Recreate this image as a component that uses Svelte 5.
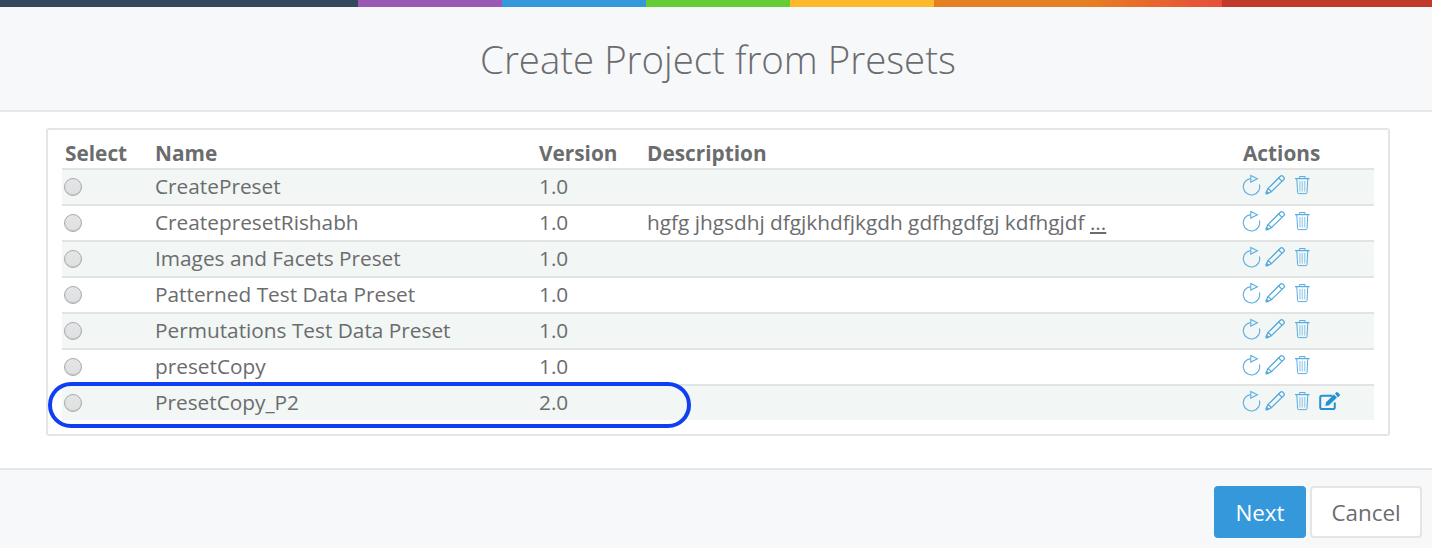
<script>
  const rows = [
    { name: 'CreatePreset', version: '1.0' },
    { name: 'CreatepresetRishabh', version: '1.0', desc: 'hgfg jhgsdhj dfgjkhdfjkgdh gdfhgdfgj kdfhgjdf', more: true },
    { name: 'Images and Facets Preset', version: '1.0' },
    { name: 'Patterned Test Data Preset', version: '1.0' },
    { name: 'Permutations Test Data Preset', version: '1.0' },
    { name: 'presetCopy', version: '1.0' },
    { name: 'PresetCopy_P2', version: '2.0', edit: true }
  ];
</script>

<div class="page">
  <div class="bar">
    <span class="seg dark"></span><span class="seg purple"></span><span class="seg blue"></span><span class="seg green"></span><span class="seg yellow"></span><span class="seg orange"></span><span class="seg red"></span>
  </div>
  <header class="head"><h1>Create Project from Presets</h1></header>
  <main class="body">
    <div class="panel">
      <div class="row th">
        <div class="c-sel">Select</div><div class="c-name">Name</div><div class="c-ver">Version</div><div class="c-desc">Description</div><div class="c-act">Actions</div>
      </div>
      {#each rows as r, i}
        <div class="row td" class:odd={i % 2 === 0}>
          <div class="c-sel"><span class="radio"></span></div>
          <div class="c-name">{r.name}</div>
          <div class="c-ver">{r.version}</div>
          <div class="c-desc">{#if r.desc}{r.desc} <u>...</u>{/if}</div>
          <div class="c-act">
            <svg class="ic" width="20" height="22" viewBox="0 0 20 22" fill="none" stroke="#5aade0" stroke-width="1.1">
              <path d="M8.4 4.6 A8.2 8.2 0 1 0 17.4 10.5" />
              <path d="M8.8 1.4 L15.4 4.7 L8.8 8 Z" />
            </svg>
            <svg class="ic pencil" width="22" height="22" viewBox="0 0 22 22" fill="none" stroke="#4fa8de" stroke-width="1.2">
              <path d="M16.6 2 Q17.6 1.2 18.6 2 L20 3.4 Q20.8 4.4 20 5.4 L7.4 17.6 L4.2 14.4 Z" />
              <path d="M14.6 3.9 L18.1 7.4" />
              <path d="M6.2 12.5 L16.3 2.4" stroke-width="0.7" />
              <path d="M4.2 14.4 L2.6 17.4 L4.6 19.2 L7.4 17.6" />
              <circle cx="2.8" cy="19" r="1.5" fill="#4fa8de" stroke="none" />
            </svg>
            <svg class="ic trash" width="16" height="22" viewBox="0 0 16 22" fill="none" stroke="#5aade0" stroke-width="1">
              <path d="M1 4.6 H15.6" stroke-width="1.3" />
              <path d="M5.6 4.2 V2.5 H11 V4.2" />
              <path d="M2.8 5 L3.6 18.8 Q3.7 19.6 4.5 19.6 H12.1 Q12.9 19.6 13 18.8 L13.8 5" />
              <path d="M5.9 7 V17.6 M8.3 7 V17.6 M10.7 7 V17.6" stroke="#a9d4ef" stroke-width="1.4" />
            </svg>
            {#if r.edit}
              <svg class="ic pen" width="22" height="22" viewBox="0 0 22 22" fill="none">
                <path d="M13.5 5.8 H3 Q1.2 5.8 1.2 7.6 V17.2 Q1.2 19 3 19 H14 Q15.8 19 15.8 17.2 V12.5" stroke="#2590d2" stroke-width="2" />
                <path d="M7 12.2 L15 4.4 L18 7.4 L10 15.2 L6.4 15.9 Z M16 3.4 L17.4 2.2 Q18 1.8 18.6 2.3 L20.8 4.4 Q21.3 5 20.8 5.6 L19 7.4 Z" fill="#2590d2" />
              </svg>
            {/if}
          </div>
        </div>
      {/each}
      <span class="oval"></span>
    </div>
  </main>
  <footer class="foot">
    <button class="btn primary">Next</button>
    <button class="btn">Cancel</button>
  </footer>
</div>

<style>
  :global(body) { margin: 0; background: #fff; }
  .page {
    width: 1432px; height: 548px; overflow: hidden;
    display: flex; flex-direction: column;
    font-family: "Open Sans", sans-serif; color: #6b6c6e;
  }
  .bar { display: flex; height: 7px; flex: none; }
  .seg { display: block; height: 100%; }
  .dark { width: 358px; background: #34495e; }
  .purple { width: 144px; background: #9b59b6; }
  .blue { width: 144px; background: #3498db; }
  .green { width: 144px; background: #66cc33; }
  .yellow { width: 144px; background: #fcb92c; }
  .orange { width: 288px; background: linear-gradient(90deg, #e67e22 0%, #e67e22 55%, #e74c3c 100%); }
  .red { flex: 1; background: #c0392b; }
  .head {
    flex: none; height: 105px; box-sizing: border-box;
    background: #f7f8fa; border-bottom: 2px solid #e5e7e8;
    display: flex; align-items: center; justify-content: center;
    padding: 2px 0 0 4px;
  }
  h1 { margin: 0; font-size: 38.4px; font-weight: 300; color: #6b6c6e; line-height: 1; }
  .body { flex: none; height: 356px; box-sizing: border-box; padding: 16px 42px 0 46px; }
  .panel {
    position: relative; width: 1344px; height: 308px; box-sizing: border-box;
    border: 2px solid #e5e5e5; border-radius: 3px;
    padding: 6px 14px 0 14px; background: #fff;
  }
  .row { display: flex; align-items: center; font-size: 20.8px; }
  .th { height: 32px; font-weight: 700; padding-top: 1px; box-sizing: border-box; }
  .td { height: 36px; box-sizing: border-box; border-top: 2px solid #e2e3e3; }
  .odd { background: #f2f6f4; }
  .row > div { padding-left: 3px; box-sizing: border-box; white-space: nowrap; }
  .c-sel { width: 90px; flex: none; }
  .c-name { width: 384px; flex: none; }
  .c-ver { width: 108px; flex: none; }
  .c-desc { width: 596px; flex: none; }
  .c-act { flex: 1; }
  .td .c-name, .td .c-ver, .td .c-desc { padding-bottom: 2px; }
  .td .c-act { display: flex; align-items: flex-start; height: 100%; padding: 4px 0 0 2px; }
  .ic { display: block; flex: none; }
  .pencil { margin-left: 2px; }
  .trash { margin-left: 8px; }
  .pen { margin-left: 9px; }
  .radio {
    display: block; width: 18px; height: 18px; box-sizing: border-box;
    margin-left: -1px; border-radius: 50%;
    background: linear-gradient(180deg, #e4e5e6 0%, #dfe0e1 100%); border: 1px solid #aaa;
    box-shadow: inset 0 -1px 0 #c9c9c9;
  }
  .oval {
    position: absolute; left: 0px; top: 252px; width: 643px; height: 46px;
    box-sizing: border-box; border: 4px solid #0f3ff0; border-radius: 23px;
    pointer-events: none;
  }
  .foot {
    flex: 1; box-sizing: border-box;
    background: #f7f8fa; border-top: 2px solid #e5e7e8;
    display: flex; justify-content: flex-end; align-items: flex-start; gap: 4px;
    padding: 16px 10px 0 0;
  }
  .btn {
    font-family: inherit; font-size: 22.4px; height: 52px; box-sizing: border-box;
    border: 2px solid #e5e5e5; border-radius: 4px; background: #fff; color: #6b6c6e;
    width: 112px; padding: 0;
  }
  .primary { width: 92px; background: #3498db; border-color: #3498db; color: #fff; }
</style>
